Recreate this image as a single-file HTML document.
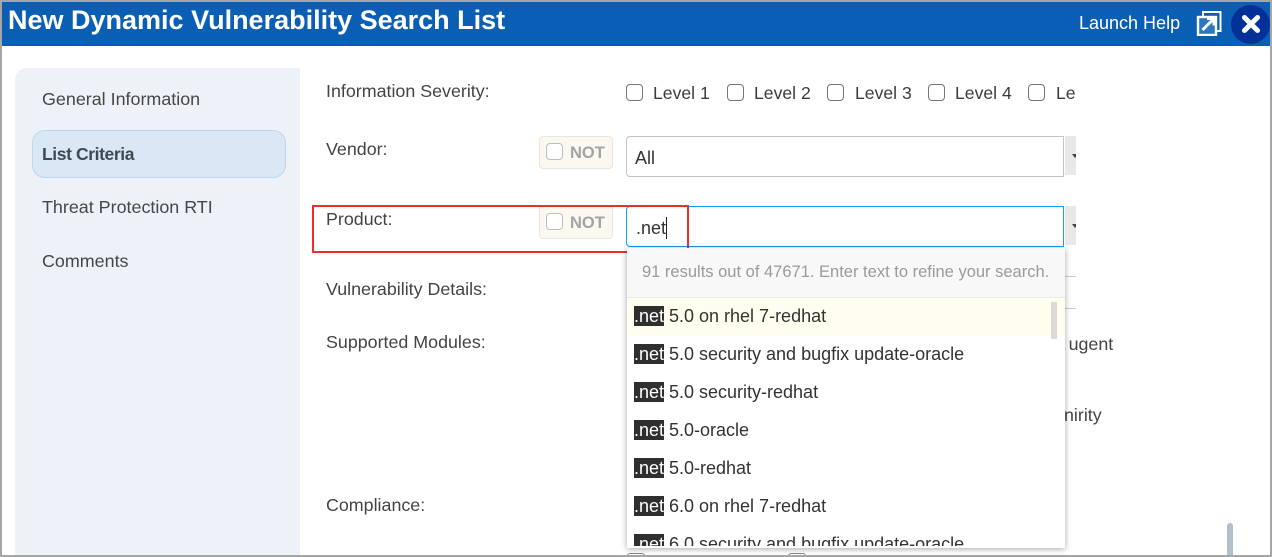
<!DOCTYPE html>
<html><head><meta charset="utf-8">
<style>
html,body{margin:0;padding:0;background:#fff}
#p{position:relative;width:1272px;height:557px;overflow:hidden;background:#fff;font-family:"Liberation Sans",sans-serif;color:#3a3a3a;font-size:16px}
#p div{position:absolute;white-space:nowrap}
.lb{font-size:17.85px;line-height:20px;color:#444}
.sd{font-size:17.9px;line-height:20px;color:#464646}
.cb{width:15px;height:15px;border:1.5px solid #757575;border-radius:4px;background:#fff}
.lv{font-size:17.6px;line-height:20px;color:#3c3c3c}
.nt{width:72px;height:31px;background:#fbf8f2;border:1px solid #e9e6df;border-radius:4px}
.nc{width:15px;height:15px;border:1.5px solid #bdbdbd;border-radius:4px;background:#fff}
.nx{font-size:16.5px;font-weight:bold;color:#a3a3a3;line-height:20px}
.it{left:7px;height:20px;line-height:21px;font-size:18px;color:#333}
.hl{background:#2f2f2f;color:#fff;display:inline-block;width:30px;height:20px;line-height:21px;overflow:hidden;margin-right:5px;vertical-align:top}
.dd{left:1065px;width:11px;height:39px;background:#e8e8e8;overflow:hidden}
.ar{left:7px;top:18px;width:0;height:0;border:3.5px solid transparent;border-top:4px solid #444;border-bottom:0}
</style></head><body>
<div id="p">
<div style="left:0;top:0;width:1272px;height:46px;background:#0a5fb4"></div>
<div style="left:8px;top:3px;font-size:27px;line-height:34px;font-weight:bold;color:#fff">New Dynamic Vulnerability Search List</div>
<div style="left:1079px;top:13px;font-size:18px;line-height:20px;color:#fff">Launch Help</div>
<svg style="position:absolute;left:1196px;top:10px" width="26" height="26" viewBox="0 0 26 26">
<rect x="7" y="2" width="17.5" height="19" fill="#0a5fb4" stroke="#fff" stroke-width="2"/>
<rect x="2" y="7" width="18" height="18" fill="#2a78bf" stroke="#fff" stroke-width="2.4"/>
<path d="M6.5 20 L17 9.5 M11 8.5 H18 V15.5" fill="none" stroke="#fff" stroke-width="3"/>
</svg>
<div style="left:1231px;top:5px;width:39px;height:39px;border-radius:50%;background:#04309a"></div>
<svg style="position:absolute;left:1241px;top:14px" width="20" height="20" viewBox="0 0 20 20"><path d="M3.5 3.5 L16.5 16.5 M16.5 3.5 L3.5 16.5" stroke="#fff" stroke-width="5" stroke-linecap="round"/></svg>

<div style="left:15px;top:68px;width:285px;height:489px;background:#edf2f9;border-top-left-radius:12px"></div>
<div style="left:32px;top:130px;width:252px;height:46px;background:#dae7f4;border:1px solid #c0d6ea;border-radius:13px"></div>
<div class="sd" style="left:42px;top:89px">General Information</div>
<div class="sd" style="left:42px;top:144px;font-size:17.5px;font-weight:bold;color:#3f4a52;letter-spacing:-.4px">List Criteria</div>
<div class="sd" style="left:42px;top:197px">Threat Protection RTI</div>
<div class="sd" style="left:42px;top:251px">Comments</div>

<div class="lb" style="left:326px;top:81px">Information Severity:</div>
<div class="lb" style="left:326px;top:139px">Vendor:</div>
<div class="lb" style="left:326px;top:209px">Product:</div>
<div class="lb" style="left:326px;top:279px">Vulnerability Details:</div>
<div class="lb" style="left:326px;top:332px">Supported Modules:</div>
<div class="lb" style="left:326px;top:495px">Compliance:</div>

<div class="cb" style="left:626px;top:84px"></div><div class="lv" style="left:653px;top:83px">Level 1</div>
<div class="cb" style="left:727px;top:84px"></div><div class="lv" style="left:754px;top:83px">Level 2</div>
<div class="cb" style="left:827px;top:84px"></div><div class="lv" style="left:855px;top:83px">Level 3</div>
<div class="cb" style="left:928px;top:84px"></div><div class="lv" style="left:955px;top:83px">Level 4</div>
<div class="cb" style="left:1028px;top:84px"></div><div class="lv" style="left:1056px;top:83px;width:19px;overflow:hidden">Level 5</div>

<div class="nt" style="left:539px;top:136px"></div><div class="nc" style="left:546px;top:143px"></div><div class="nx" style="left:570px;top:143px">NOT</div>
<div class="nt" style="left:539px;top:206px"></div><div class="nc" style="left:546px;top:213px"></div><div class="nx" style="left:570px;top:213px">NOT</div>

<div style="left:626px;top:136px;width:436px;height:39px;border:1px solid #c4c4c4;border-radius:4px 0 0 4px;background:#fff"></div>
<div style="left:635px;top:148px;font-size:18px;line-height:21px;color:#333">All</div>
<div class="dd" style="top:136px"><div class="ar"></div></div>

<div style="left:626px;top:206px;width:436px;height:39px;border:1px solid #1a9bf5;border-radius:4px 0 0 4px;background:#fff"></div>
<div style="left:636px;top:218px;font-size:18px;line-height:21px;color:#333">.net</div>
<div style="left:666px;top:217px;width:1px;height:22px;background:#222"></div>
<div class="dd" style="top:206px"><div class="ar"></div></div>

<div style="left:312px;top:205px;width:373px;height:44px;border:2px solid #ee2e2e"></div>

<div style="left:1065px;top:276px;width:11px;height:1px;background:#ccc"></div>
<div style="left:1065px;top:308px;width:11px;height:1px;background:#ccc"></div>
<div class="lb" style="left:1065px;top:334px;width:50px;overflow:hidden">&#8201;ugent</div>
<div class="lb" style="left:1064px;top:405px;width:40px;overflow:hidden">nirity</div>

<div style="left:627px;top:553px;width:16px;height:4px;background:#fff;border:1px solid #888;border-radius:3px"></div>
<div style="left:788px;top:553px;width:16px;height:4px;background:#fff;border:1px solid #888;border-radius:3px"></div>

<div style="left:627px;top:248px;width:438px;height:300px;background:#fff;box-shadow:0 1px 6px rgba(0,0,0,.35);overflow:hidden">
  <div style="left:0;top:0;width:438px;height:49px;background:#f8f8f8;border-bottom:1px solid #e9e9e9"></div>
  <div style="left:15px;top:14px;font-size:16.5px;line-height:21px;color:#9a9a9a">91 results out of 47671. Enter text to refine your search.</div>
  <div style="left:0;top:50px;width:438px;height:38px;background:#fffeef"></div>
  <div style="left:424px;top:54px;width:6px;height:37px;background:#ddd9d6"></div>
  <div class="it" style="top:58px"><span class="hl">.net</span>5.0 on rhel 7-redhat</div>
  <div class="it" style="top:96px"><span class="hl">.net</span>5.0 security and bugfix update-oracle</div>
  <div class="it" style="top:134px"><span class="hl">.net</span>5.0 security-redhat</div>
  <div class="it" style="top:172px"><span class="hl">.net</span>5.0-oracle</div>
  <div class="it" style="top:210px"><span class="hl">.net</span>5.0-redhat</div>
  <div class="it" style="top:248px"><span class="hl">.net</span>6.0 on rhel 7-redhat</div>
  <div class="it" style="top:286px"><span class="hl">.net</span>6.0 security and bugfix update-oracle</div>
  <div style="left:0;top:298px;width:438px;height:2px;background:#fff"></div>
</div>

<div style="left:1227px;top:523px;width:6px;height:34px;background:#b0c0ca;border-radius:3px 3px 0 0"></div>

<div style="left:0;top:0;width:1272px;height:2px;background:#a6a6a6"></div>
<div style="left:0;top:555px;width:1272px;height:2px;background:#a6a6a6"></div>
<div style="left:0;top:0;width:2px;height:557px;background:#a6a6a6"></div>
<div style="left:1270px;top:0;width:2px;height:557px;background:#a6a6a6"></div>
</div>
</body></html>
